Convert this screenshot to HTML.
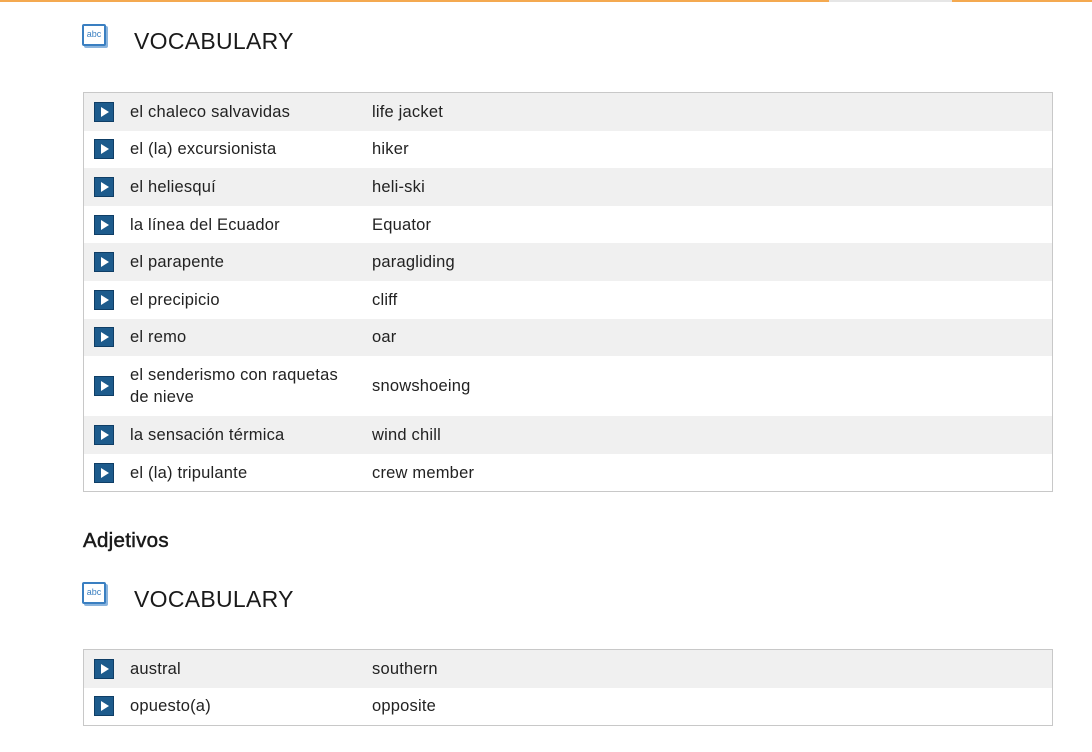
<!DOCTYPE html>
<html><head><style>
body{margin:0;width:1092px;height:752px;background:#fff;font-family:"Liberation Sans",sans-serif;color:#222;position:relative;overflow:hidden}
.bar{position:absolute;top:0;height:2px;background:#f4a950}
.h{position:absolute;left:82px;font-size:23px;color:#1a1a1a}
.h .ic{position:absolute;left:0;top:-4px;width:24px;height:22px;border:2px solid #3a7fc1;border-radius:2px;box-sizing:border-box;font-size:9px;color:#3a7fc1;text-align:center;line-height:16px;background:#fff;box-shadow:2px 2px 0 #8ab4dd}
.h span.t{position:absolute;left:52px;top:0;white-space:nowrap;letter-spacing:.3px}
table{position:absolute;left:83px;width:970px;border:1px solid #c8c8c8;border-collapse:collapse;font-size:16.5px;letter-spacing:.2px}
td{padding:0;height:37.6px;vertical-align:middle;line-height:22px}
tr:nth-child(odd){background:#f0f0f0}
td.p{width:36px;padding-left:10px;line-height:0}
.pl{width:20px;height:20px;background:#1d5b8c;position:relative;box-sizing:border-box;border:1px solid #0f3e66;display:block}
.pl:after{content:"";position:absolute;left:6px;top:4px;border-left:8px solid #fff;border-top:5px solid transparent;border-bottom:5px solid transparent}
td.a{width:242px}
</style></head><body>
<div class="bar" style="left:0;width:829px"></div>
<div class="bar" style="left:829px;width:123px;background:#e6e6e6"></div>
<div class="bar" style="left:952px;width:140px"></div>

<div class="h" style="top:28px"><div class="ic">abc</div><span class="t">VOCABULARY</span></div>
<table style="top:92px">
<tr><td class="p"><div class="pl"></div></td><td class="a">el chaleco salvavidas</td><td>life jacket</td></tr>
<tr><td class="p"><div class="pl"></div></td><td class="a">el (la) excursionista</td><td>hiker</td></tr>
<tr><td class="p"><div class="pl"></div></td><td class="a">el heliesquí</td><td>heli-ski</td></tr>
<tr><td class="p"><div class="pl"></div></td><td class="a">la línea del Ecuador</td><td>Equator</td></tr>
<tr><td class="p"><div class="pl"></div></td><td class="a">el parapente</td><td>paragliding</td></tr>
<tr><td class="p"><div class="pl"></div></td><td class="a">el precipicio</td><td>cliff</td></tr>
<tr><td class="p"><div class="pl"></div></td><td class="a">el remo</td><td>oar</td></tr>
<tr><td class="p" style="height:60px"><div class="pl"></div></td><td class="a">el senderismo con raquetas<br>de nieve</td><td>snowshoeing</td></tr>
<tr><td class="p"><div class="pl"></div></td><td class="a">la sensación térmica</td><td>wind chill</td></tr>
<tr><td class="p"><div class="pl"></div></td><td class="a">el (la) tripulante</td><td>crew member</td></tr>
</table>

<div style="position:absolute;left:83px;top:529px;font-size:20.5px;-webkit-text-stroke:0.5px #1a1a1a;color:#1a1a1a;letter-spacing:.3px">Adjetivos</div>

<div class="h" style="top:586px"><div class="ic">abc</div><span class="t">VOCABULARY</span></div>
<table style="top:649px">
<tr><td class="p"><div class="pl"></div></td><td class="a">austral</td><td>southern</td></tr>
<tr><td class="p"><div class="pl"></div></td><td class="a">opuesto(a)</td><td>opposite</td></tr>
</table>
</body></html>
